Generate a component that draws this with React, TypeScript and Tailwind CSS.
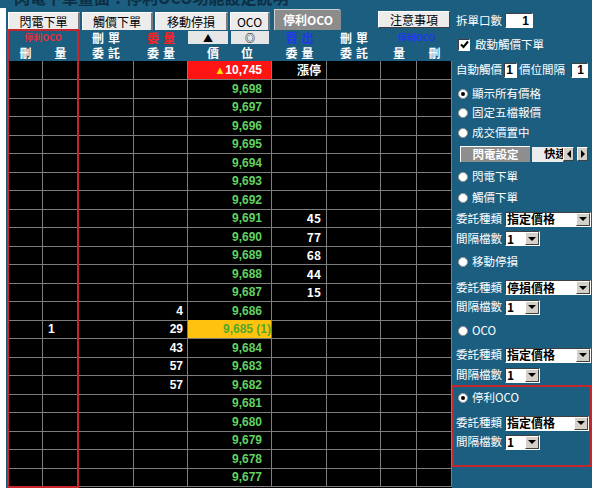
const COLS = 'grid grid-cols-[35px_35px_56px_54px_84px_55px_54px_36px_35px]';
const CJK = "font-['Noto_Sans_CJK_TC','Noto_Sans_CJK_SC',sans-serif]";
const NUM = "font-['Liberation_Sans','Noto_Sans_CJK_TC',sans-serif]";

type Row = { price: string; buy?: string; sell?: string; qty?: string; kind?: 'limit' | 'last' };

const sells: Record<number, string> = { 691: '45', 690: '77', 689: '68', 688: '44', 687: '15' };
const buys: Record<number, string> = { 686: '4', 685: '29', 684: '43', 683: '57', 682: '57' };

const rows: Row[] = [{ price: '10,745', sell: '漲停', kind: 'limit' }];
for (let n = 698; n >= 677; n--) {
  rows.push({
    price: n === 685 ? '9,685 (1)' : `9,${n}`,
    buy: buys[n],
    sell: sells[n],
    qty: n === 685 ? '1' : undefined,
    kind: n === 685 ? 'last' : undefined,
  });
}

function Cell({ children, className = '' }: { children?: React.ReactNode; className?: string }) {
  return (
    <div className={`flex items-center border-r border-b border-[#7d7d7d] ${className}`}>{children}</div>
  );
}

function Tab({ label, w }: { label: string; w: string }) {
  return (
    <div
      className={`${w} flex h-[18px] items-center justify-center border-t border-l border-white border-r-2 border-r-[#7a7a7a] bg-[#ececec] text-[12px] leading-none text-black ${CJK}`}
    >
      {label}
    </div>
  );
}

function Radio({ checked = false }: { checked?: boolean }) {
  return (
    <span className="flex h-[10px] w-[10px] shrink-0 items-center justify-center rounded-full border border-[#9a9a9a] bg-white">
      {checked && <span className="h-[4px] w-[4px] rounded-full bg-black" />}
    </span>
  );
}

function Input({ w, value }: { w: string; value: string }) {
  return (
    <span
      className={`${w} flex h-[15px] shrink-0 items-center justify-end border border-t-[#404040] border-l-[#404040] border-r-white border-b-white bg-white pr-[3px] text-[12px] font-bold text-black ${NUM}`}
    >
      {value}
    </span>
  );
}

function Select({ w, value }: { w: string; value: string }) {
  return (
    <span
      className={`${w} flex h-[15px] shrink-0 items-center border border-t-[#404040] border-l-[#404040] border-r-white border-b-white bg-white`}
    >
      <span className={`flex-1 pl-[1px] text-[12px] font-bold leading-none text-black ${CJK}`}>{value}</span>
      <span className="flex h-[13px] w-[14px] shrink-0 items-center justify-center border border-t-white border-l-white border-r-[#404040] border-b-[#404040] bg-[#d4d0c8]">
        <span className="h-0 w-0 border-x-[4px] border-t-[4px] border-x-transparent border-t-black" />
      </span>
    </span>
  );
}

function RadioRow({ h, label, checked }: { h: string; label: string; checked?: boolean }) {
  return (
    <div className={`${h} flex shrink-0 items-center gap-[4px] pl-[6px]`}>
      <Radio checked={checked} />
      <span>{label}</span>
    </div>
  );
}

function FieldRow({ h, label, children, className = '' }: { h: string; label: string; children: React.ReactNode; className?: string }) {
  return (
    <div className={`${h} flex shrink-0 items-center gap-[3px] pl-[4px] ${className}`}>
      <span className="shrink-0">{label}</span>
      {children}
    </div>
  );
}

function RightPanel() {
  return (
    <div className={`flex w-[140px] flex-col whitespace-nowrap bg-[#1b5e80] text-[11.5px] leading-none text-white ${CJK}`}>
      <FieldRow h="h-[25px]" label="拆單口數">
        <Input w="w-[28px]" value="1" />
      </FieldRow>
      <div className="flex h-[23px] shrink-0 items-center gap-[5px] pl-[6px]">
        <span className="flex h-[12px] w-[12px] items-center justify-center border border-t-[#404040] border-l-[#404040] border-r-white border-b-white bg-white">
          <svg width="9" height="9" viewBox="0 0 9 9">
            <path d="M1 4.5 L3.5 7 L8 1.5" fill="none" stroke="black" strokeWidth="2" />
          </svg>
        </span>
        <span>啟動觸價下單</span>
      </div>
      <div className="flex h-[28px] shrink-0 items-center pl-[4px]">
        <span>自動觸價</span>
        <span className="ml-[2px]">
          <Input w="w-[13px]" value="1" />
        </span>
        <span className="ml-[2px]">價位間隔</span>
        <span className="ml-[6px]">
          <Input w="w-[17px]" value="1" />
        </span>
      </div>
      <RadioRow h="h-[19px]" label="顯示所有價格" checked />
      <RadioRow h="h-[20px]" label="固定五檔報價" />
      <RadioRow h="h-[19px]" label="成交價置中" />
      <div className="flex h-[24px] shrink-0 items-center pl-[8px]">
        <div className="flex h-[16px] w-[70px] items-center justify-center border-t border-l border-white bg-[#8e8e8e] font-bold text-white">
          閃電設定
        </div>
        <div className="ml-[2px] flex h-[15px] w-[31px] items-center overflow-hidden bg-[#ececec] pl-[12px] font-bold text-black">
          快速鍵
        </div>
        <div className="flex h-[14px] w-[11px] items-center justify-center border border-t-white border-l-white border-r-[#404040] border-b-[#404040] bg-[#d4d0c8]">
          <span className="h-0 w-0 border-y-[4px] border-r-[4px] border-y-transparent border-r-black" />
        </div>
        <div className="ml-[3px] flex h-[14px] w-[11px] items-center justify-center border border-t-white border-l-white border-r-[#404040] border-b-[#404040] bg-[#d4d0c8]">
          <span className="h-0 w-0 border-y-[4px] border-l-[4px] border-y-transparent border-l-black" />
        </div>
      </div>
      <RadioRow h="h-[21px]" label="閃電下單" />
      <RadioRow h="h-[21px]" label="觸價下單" />
      <FieldRow h="h-[22px]" label="委託種類">
        <Select w="w-[86px]" value="指定價格" />
      </FieldRow>
      <FieldRow h="h-[17px]" label="間隔檔數">
        <Select w="w-[35px]" value="1" />
      </FieldRow>
      <RadioRow h="h-[30px]" label="移動停損" />
      <FieldRow h="h-[21px]" label="委託種類">
        <Select w="w-[86px]" value="停損價格" />
      </FieldRow>
      <FieldRow h="h-[18px]" label="間隔檔數">
        <Select w="w-[35px]" value="1" />
      </FieldRow>
      <RadioRow h="h-[29px]" label="OCO" />
      <FieldRow h="h-[20px]" label="委託種類">
        <Select w="w-[86px]" value="指定價格" />
      </FieldRow>
      <FieldRow h="h-[20px]" label="間隔檔數">
        <Select w="w-[35px]" value="1" />
      </FieldRow>
      {/* highlighted group */}
      <div className="flex h-[82px] shrink-0 flex-col border-2 border-[#c0282e]">
        <div className="flex h-[21px] items-center gap-[4px] pl-[4px]">
          <Radio checked />
          <span>停利OCO</span>
        </div>
        <div className="mt-[4px] flex h-[22px] items-center gap-[3px] pl-[2px]">
          <span className="shrink-0">委託種類</span>
          <Select w="w-[84px]" value="指定價格" />
        </div>
        <div className="flex h-[16px] items-center gap-[3px] pl-[2px]">
          <span className="shrink-0">間隔檔數</span>
          <Select w="w-[35px]" value="1" />
        </div>
      </div>
      <div className="flex-1" />
    </div>
  );
}

function LeftSection() {
  return (
    <div className="relative flex w-[446px] flex-col bg-[#1b5e80]">
      {/* tabs */}
      <div className="flex h-[22px] shrink-0 items-end pl-[2px]">
        <Tab label="閃電下單" w="w-[72px]" />
        <div className="w-[2px]" />
        <Tab label="觸價下單" w="w-[71px]" />
        <div className="w-[2px]" />
        <Tab label="移動停損" w="w-[73px]" />
        <div className="w-[2px]" />
        <Tab label="OCO" w="w-[40px]" />
        <div className="w-[4px]" />
        <div
          className={`flex h-[21px] w-[67px] items-center justify-center rounded-tr-[3px] border-t border-l border-[#d0d0d0] bg-[#8c8c8c] text-[12px] font-bold leading-none text-white ${CJK}`}
        >
          停利OCO
        </div>
        <div
          className={`mb-[2px] ml-[37px] flex h-[17px] w-[72px] items-center justify-center border border-t-white border-l-white border-r-[#404040] border-b-[#404040] bg-[#ececec] text-[12px] leading-none text-black ${CJK}`}
        >
          注意事項
        </div>
      </div>
      {/* header */}
      <div className={`shrink-0 pl-[2px] text-[12px] font-bold leading-none ${CJK}`}>
        <div className={`${COLS} h-[15px] items-center`}>
          <div className="col-span-2 text-center text-[9px] text-[#e0303a]">停利OCO</div>
          <div className="pl-[4px] text-center tracking-[4px] text-white">刪單</div>
          <div className="pl-[4px] text-center tracking-[4px] text-[#ff2020]">委量</div>
          <div className="flex items-center gap-[3px]">
            <span className="flex h-[13px] w-[40px] items-center justify-center bg-[#e6e6e6] text-[10px] text-black">▲</span>
            <span className="flex h-[13px] w-[38px] items-center justify-center bg-[#e6e6e6] text-[10px] text-black">◎</span>
          </div>
          <div className="pl-[4px] text-center tracking-[4px] text-[#2038f0]">賣出</div>
          <div className="pl-[4px] text-center tracking-[4px] text-white">刪單</div>
          <div className="col-span-2 text-center text-[9px] text-[#2038f0]">停利OCO</div>
        </div>
        <div className={`${COLS} h-[16px] items-center text-white`}>
          <div className="text-center">刪</div>
          <div className="text-center">量</div>
          <div className="pl-[4px] text-center tracking-[4px]">委託</div>
          <div className="pl-[4px] text-center tracking-[4px]">委量</div>
          <div className="flex justify-center gap-[22px]">
            <span>價</span>
            <span>位</span>
          </div>
          <div className="pl-[4px] text-center tracking-[4px]">委量</div>
          <div className="pl-[4px] text-center tracking-[4px]">委託</div>
          <div className="text-center">量</div>
          <div className="text-center">刪</div>
        </div>
      </div>
      {/* quote ladder */}
      <div className="ml-[2px] flex-1 bg-black">
        {rows.map((r, i) => (
          <div key={i} className={`${COLS} h-[18.5px] text-[12px] font-bold ${NUM}`}>
            <Cell />
            <Cell className="pl-[5px] text-white">{r.qty}</Cell>
            <Cell />
            <Cell className="justify-end pr-[4px] text-white">{r.buy}</Cell>
            {r.kind === 'limit' ? (
              <Cell className="justify-end bg-[#ff1414] pr-[9px] text-white">
                <span className="text-[11px] text-[#ffe000]">▲</span>
                {r.price}
              </Cell>
            ) : r.kind === 'last' ? (
              <Cell className="justify-end whitespace-pre bg-[#ffc20e] pr-0 text-[#52a82c]">{r.price}</Cell>
            ) : (
              <Cell className="justify-end pr-[9px] text-[#62d162]">{r.price}</Cell>
            )}
            <Cell className={`justify-end pr-[5px] text-white ${CJK}`}>{r.sell}</Cell>
            <Cell />
            <Cell />
            <Cell />
          </div>
        ))}
      </div>
      {/* red highlight on the left columns */}
      <div className="pointer-events-none absolute top-[21px] left-[1px] h-[459px] w-[72px] border-2 border-[#c8262c]" />
    </div>
  );
}

export default function App() {
  return (
    <div className="h-[494px] w-[599px] overflow-hidden bg-white">
      <div className="h-[8px] w-[592px] overflow-hidden bg-[#1b5e80]">
        <div className={`-mt-[13px] pl-[14px] text-[16px] font-bold leading-[20px] text-[#0c2f44] ${CJK}`}>
          閃電下單畫面：停利OCO功能設定說明
        </div>
      </div>
      <div className="flex h-[480px] w-[592px]">
        <div className="w-[6px] bg-white" />
        <LeftSection />
        <RightPanel />
      </div>
    </div>
  );
}
